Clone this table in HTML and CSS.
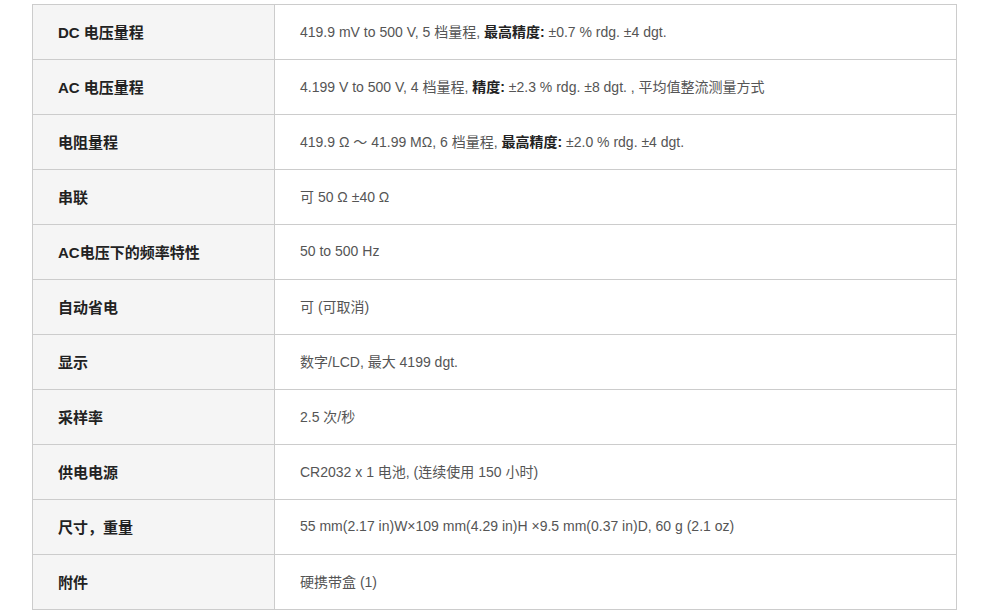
FILE: index.html
```html
<!DOCTYPE html>
<html lang="zh-CN">
<head>
<meta charset="utf-8">
<link rel="stylesheet" href="styles.css">
</head>
<body>
<div class="wrap">
<table class="spec">
<tbody>
<tr><th>DC 电压量程</th><td>419.9 mV to 500 V, 5 档量程, <b>最高精度:</b> ±0.7 % rdg. ±4 dgt.</td></tr>
<tr><th>AC 电压量程</th><td>4.199 V to 500 V, 4 档量程, <b>精度:</b> ±2.3 % rdg. ±8 dgt. , 平均值整流测量方式</td></tr>
<tr><th>电阻量程</th><td>419.9 Ω ～ 41.99 MΩ, 6 档量程, <b>最高精度:</b> ±2.0 % rdg. ±4 dgt.</td></tr>
<tr><th>串联</th><td>可 50 Ω ±40 Ω</td></tr>
<tr><th>AC电压下的频率特性</th><td>50 to 500 Hz</td></tr>
<tr><th>自动省电</th><td>可 (可取消)</td></tr>
<tr><th>显示</th><td>数字/LCD, 最大 4199 dgt.</td></tr>
<tr><th>采样率</th><td>2.5 次/秒</td></tr>
<tr><th>供电电源</th><td>CR2032 x 1 电池, (连续使用 150 小时)</td></tr>
<tr><th>尺寸，重量</th><td>55 mm(2.17 in)W×109 mm(4.29 in)H ×9.5 mm(0.37 in)D, 60 g (2.1 oz)</td></tr>
<tr><th>附件</th><td>硬携带盒 (1)</td></tr>
</tbody>
</table>
</div>
</body>
</html>
```
FILE: styles.css
```css
html, body {
  margin: 0;
  padding: 0;
  background: #fff;
}
body {
  font-family: "Liberation Sans", Arial, "Noto Sans CJK SC", sans-serif;
  font-size: 14px;
}
.wrap {
  padding: 4px 0 0 32px;
}
.spec {
  border-collapse: collapse;
  width: 925px;
  table-layout: fixed;
}
.spec tr {
  height: 55px;
}
.spec th,
.spec td {
  border: 1px solid #cccccc;
  padding: 0 0 2px 25px;
  text-align: left;
  vertical-align: middle;
  box-sizing: border-box;
}
.spec th {
  width: 242px;
  background: #f5f5f5;
  color: #222;
  font-size: 15px;
  font-weight: bold;
}
.spec td {
  color: #555;
  background: #fff;
}
.spec td b {
  color: #222;
  font-weight: bold;
}
```
